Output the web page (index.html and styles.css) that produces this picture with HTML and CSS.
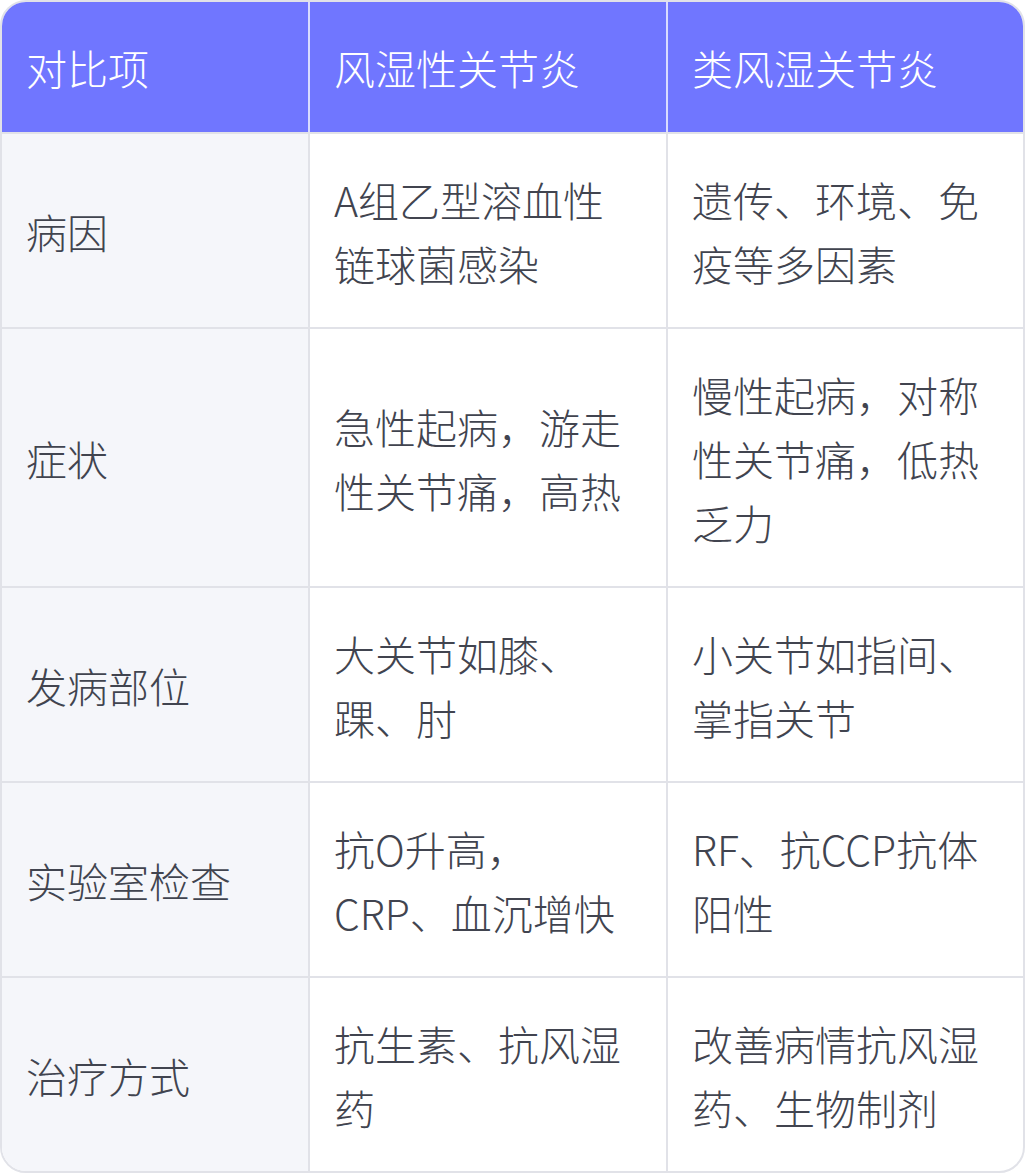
FILE: index.html
```html
<!DOCTYPE html>
<html lang="zh">
<head>
<meta charset="utf-8">
<link rel="stylesheet" href="styles.css">
</head>
<body>
<div class="wrap">
<table class="cmp">
<colgroup><col class="c1"><col class="c2"><col class="c3"></colgroup>
<thead>
<tr><th>对比项</th><th>风湿性关节炎</th><th>类风湿关节炎</th></tr>
</thead>
<tbody>
<tr><td class="k">病因</td><td>A组乙型溶血性链球菌感染</td><td>遗传、环境、免疫等多因素</td></tr>
<tr><td class="k">症状</td><td>急性起病，游走性关节痛，高热</td><td>慢性起病，对称性关节痛，低热乏力</td></tr>
<tr><td class="k">发病部位</td><td>大关节如膝、踝、肘</td><td>小关节如指间、掌指关节</td></tr>
<tr><td class="k">实验室检查</td><td>抗O升高，CRP、血沉增快</td><td>RF、抗CCP抗体阳性</td></tr>
<tr><td class="k">治疗方式</td><td>抗生素、抗风湿药</td><td>改善病情抗风湿药、生物制剂</td></tr>
</tbody>
</table>
</div>
</body>
</html>
```
FILE: styles.css
```css
html, body { margin: 0; padding: 0; background: #ffffff; }
body { font-family: "Noto Sans CJK SC", "Noto Sans", sans-serif; }
.wrap {
  width: 1025px;
  box-sizing: border-box;
  border: 2px solid #e1e2e8;
  border-radius: 26px;
  overflow: hidden;
}
.cmp {
  width: 100%;
  border-collapse: separate;
  border-spacing: 0;
  table-layout: fixed;
  font-size: 41px;
  line-height: 64px;
  font-weight: 300;
  color: #41444f;
}
.c1 { width: 306px; }
.c2 { width: 358px; }
.c3 { width: 357px; }
th, td {
  text-align: left;
  vertical-align: middle;
  padding: 33px 26px 32px 24px;
  border-left: 2px solid #e1e2e8;
  border-top: 2px solid #e1e2e8;
}
th:first-child, td:first-child { border-left: none; }
thead th {
  background: #7076ff;
  color: #ffffff;
  font-weight: 300;
  border-top: none;
  border-left-color: #d9dbff;
  padding-top: 33px;
  padding-bottom: 33px;
}
td.k { background: #f5f6fa; }
```
